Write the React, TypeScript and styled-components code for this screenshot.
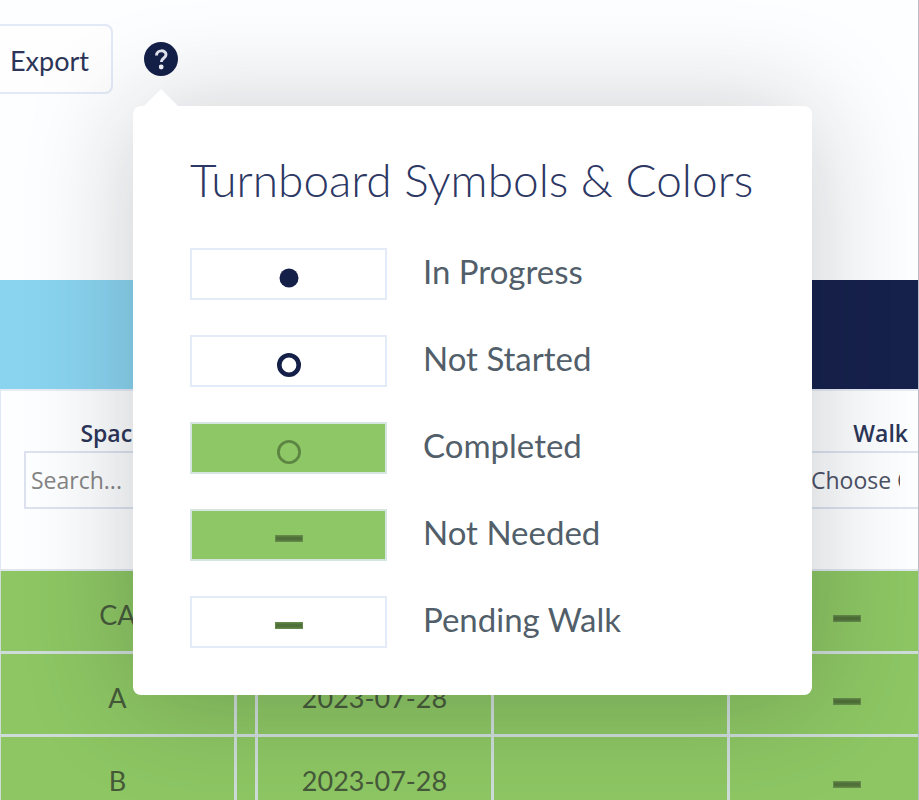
import React from "react";
import styled, { createGlobalStyle } from "styled-components";

const GlobalStyle = createGlobalStyle`
  * { box-sizing: border-box; }
  html, body { margin: 0; background: #fdfeff; }
  body { font-family: Lato, "Open Sans", sans-serif; overflow: hidden; }
`;

const Page = styled.main`
  min-height: 100vh;
  overflow: hidden;
  border-right: 1px solid #b9bcc4;
`;

const Toolbar = styled.header`
  display: flex;
  align-items: flex-start;
  gap: 30px;
  height: 280px;
  padding-top: 24px;
`;

const ExportButton = styled.button`
  height: 70px;
  padding: 2px 22px 0 10px;
  border: 2px solid #e3e9f6;
  border-left: 0;
  border-radius: 0 8px 8px 0;
  background: #fefeff;
  color: #2c3558;
  font: 400 27px Lato, sans-serif;
`;

const HelpAnchor = styled.div`
  position: relative;
  z-index: 2;
  padding-top: 17px;
`;

const HelpButton = styled.button`
  display: block;
  width: 36px;
  height: 36px;
  padding: 0;
  border: 0;
  background: none;
`;

const Popover = styled.section`
  position: absolute;
  top: 82px;
  left: -10px;
  width: 679px;
  padding: 48px 57px 47px;
  border-radius: 8px;
  background: #fff;
  box-shadow: 0 4px 110px rgba(16, 24, 36, 0.22);

  &::before {
    content: "";
    position: absolute;
    top: -17px;
    left: 10px;
    border: solid transparent;
    border-width: 0 18px 18px;
    border-bottom-color: #fff;
  }
`;

const Title = styled.h2`
  margin: 0 0 42px;
  color: #2c3763;
  font-size: 46px;
  font-weight: 300;
  line-height: 52px;
  white-space: nowrap;
`;

const Legend = styled.ul`
  display: grid;
  gap: 35px;
  margin: 0;
  padding: 0;
  list-style: none;
`;

const LegendRow = styled.li`
  display: flex;
  align-items: center;
  gap: 36px;
  height: 52px;
  color: #525f6a;
  font-size: 33px;
  line-height: 48px;
`;

const Swatch = styled.span<{ $filled?: boolean }>`
  display: flex;
  align-items: center;
  justify-content: center;
  width: 197px;
  height: 52px;
  padding-top: 8px;
  border: 2px solid ${(p) => (p.$filled ? "#d5e5e0" : "#e3ebf9")};
  background: ${(p) => (p.$filled ? "#8ec765" : "#fff")};
`;

const LegendText = styled.span`
  padding-bottom: 6px;
`;

const Table = styled.table`
  width: 965px;
  table-layout: fixed;
  border-collapse: separate;
  border-spacing: 0;
`;

const Band = styled.th<{ $color: string }>`
  height: 109px;
  padding: 0;
  background: ${(p) => p.$color};
`;

const ColumnHead = styled.th<{ $align?: "right" }>`
  height: 182px;
  padding: ${(p) => (p.$align ? "28px 0 0 24px" : "28px 24px 0 23px")};
  border-top: 2px solid #e6ebf4;
  border-bottom: 2px solid #dfe6ee;
  vertical-align: top;
  color: #2c3658;
  font-family: "Open Sans", sans-serif;
  font-size: 23px;
  font-weight: 600;
  line-height: 28px;
  text-align: ${(p) => p.$align ?? "center"};

  &:first-child { border-left: 1px solid #dfe6f6; }
`;

const HeadLabel = styled.label<{ $end?: boolean }>`
  display: block;
  padding: 0 ${(p) => (p.$end ? "57px" : "0")} 4px 0;
`;

const SearchInput = styled.input`
  display: block;
  width: 187px;
  height: 58px;
  padding: 0 5px;
  border: 2px solid #dce3ef;
  background: transparent;
  color: #333;
  font: 400 23px "Open Sans", sans-serif;

  &::placeholder { color: #858585; opacity: 1; }
`;

const FilterSelect = styled.select`
  display: block;
  width: 187px;
  height: 58px;
  padding: 0 39px 0 55px;
  border: 2px solid #dce3ef;
  border-radius: 0;
  appearance: none;
  background: transparent;
  color: #4c5266;
  font: 400 23px "Open Sans", sans-serif;
`;

const Cell = styled.td`
  height: 83px;
  padding: 8px 0 0;
  border-right: 3px solid #cddcd8;
  border-bottom: 3px solid #cddcd8;
  background: #8dc663;
  color: #465a3a;
  font-size: 27px;
  line-height: 32px;
  text-align: center;

  &:first-child { border-left: 1px solid #cddcd8; }
`;

const StatusCell = styled(Cell)`
  padding: 16px 0 0 2px;
`;

const Icon = styled.svg`
  display: block;
  flex: none;
  margin: 0 auto;
`;

function HelpIcon() {
  return (
    <Icon width="36" height="36" viewBox="0 0 36 36" aria-hidden="true">
      <circle cx="18" cy="18" r="17" fill="#142048" />
      <path
        d="M13.5 14.5c0-6 9.5-6 9.5-1 0 4-4.7 3.5-4.7 7.5"
        fill="none"
        stroke="#e4e6f0"
        strokeWidth="3"
      />
      <circle cx="18.2" cy="26" r="2.4" fill="#f4f5fa" />
    </Icon>
  );
}

function Dot() {
  return (
    <Icon width="28" height="26" viewBox="0 0 28 26">
      <circle cx="14" cy="13" r="9.5" fill="#142048" />
    </Icon>
  );
}

function Ring({ color, weight }: { color: string; weight: number }) {
  return (
    <Icon width="28" height="26" viewBox="0 0 28 26">
      <circle cx="14" cy="13" r={12 - weight / 2} fill="none" stroke={color} strokeWidth={weight} />
    </Icon>
  );
}

function Dash() {
  return (
    <Icon width="28" height="26" viewBox="0 0 28 26">
      <rect y="9" width="28" height="7" fill="#64894a" />
      <rect x="1" y="10.5" width="26" height="4" fill="#4f7038" />
    </Icon>
  );
}

const legend = [
  { label: "In Progress", icon: <Dot /> },
  { label: "Not Started", icon: <Ring color="#142048" weight={4.6} /> },
  { label: "Completed", icon: <Ring color="#5d8643" weight={2.8} />, filled: true },
  { label: "Not Needed", icon: <Dash />, filled: true },
  { label: "Pending Walk", icon: <Dash /> },
];

const rows = [
  { space: "CA", date: "" },
  { space: "A", date: "2023-07-28" },
  { space: "B", date: "2023-07-28" },
];

const columnWidths = [237, 21, 236, 236, 235];

export default function App() {
  return (
    <Page>
      <GlobalStyle />
      <Toolbar>
        <ExportButton type="button">Export</ExportButton>
        <HelpAnchor>
          <HelpButton type="button" aria-label="Help">
            <HelpIcon />
          </HelpButton>
          <Popover>
            <Title>Turnboard Symbols &amp; Colors</Title>
            <Legend>
              {legend.map((item) => (
                <LegendRow key={item.label}>
                  <Swatch $filled={item.filled}>{item.icon}</Swatch>
                  <LegendText>{item.label}</LegendText>
                </LegendRow>
              ))}
            </Legend>
          </Popover>
        </HelpAnchor>
      </Toolbar>
      <Table>
        <colgroup>
          {columnWidths.map((width, i) => (
            <col key={i} width={width} />
          ))}
        </colgroup>
        <thead>
          <tr>
            <Band $color="#8ad4f0" colSpan={3} />
            <Band $color="#16214c" colSpan={2} />
          </tr>
          <tr>
            <ColumnHead>
              <HeadLabel htmlFor="space">Spaces</HeadLabel>
              <SearchInput id="space" placeholder="Search..." />
            </ColumnHead>
            <ColumnHead />
            <ColumnHead />
            <ColumnHead />
            <ColumnHead $align="right">
              <HeadLabel htmlFor="walk" $end>Walk</HeadLabel>
              <FilterSelect id="walk">
                <option>Choose One</option>
              </FilterSelect>
            </ColumnHead>
          </tr>
        </thead>
        <tbody>
          {rows.map((row) => (
            <tr key={row.space}>
              <Cell>{row.space}</Cell>
              <Cell />
              <Cell>{row.date}</Cell>
              <Cell />
              <StatusCell><Dash /></StatusCell>
            </tr>
          ))}
        </tbody>
      </Table>
    </Page>
  );
}
